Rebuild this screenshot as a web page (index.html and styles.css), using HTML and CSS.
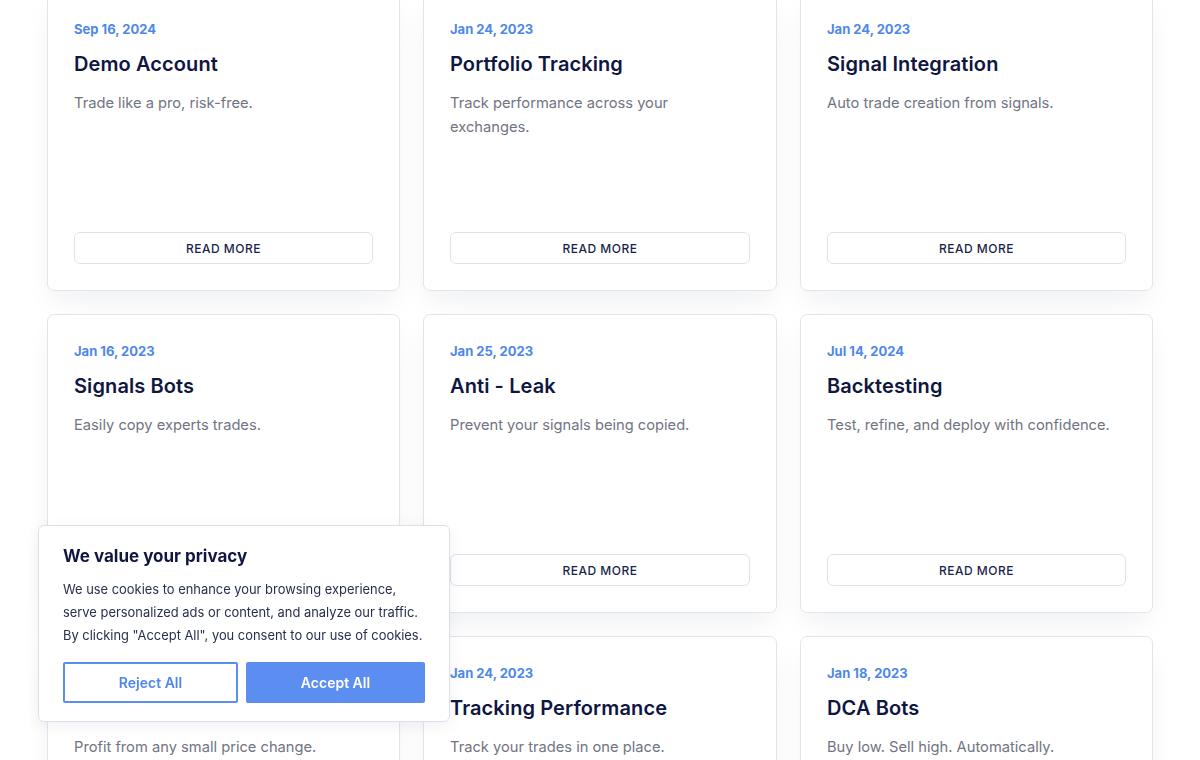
FILE: index.html
```html
<!DOCTYPE html>
<html lang="en">
<head>
<meta charset="utf-8">
<title>Features</title>
<link rel="stylesheet" href="styles.css">
</head>
<body>
<main class="features">
  <article class="card">
    <p class="card-date">Sep 16, 2024</p>
    <h3 class="card-title">Demo Account</h3>
    <p class="card-text">Trade like a pro, risk-free.</p>
    <a class="card-btn" href="#">READ MORE</a>
  </article>
  <article class="card">
    <p class="card-date">Jan 24, 2023</p>
    <h3 class="card-title">Portfolio Tracking</h3>
    <p class="card-text">Track performance across your exchanges.</p>
    <a class="card-btn" href="#">READ MORE</a>
  </article>
  <article class="card">
    <p class="card-date">Jan 24, 2023</p>
    <h3 class="card-title">Signal Integration</h3>
    <p class="card-text">Auto trade creation from signals.</p>
    <a class="card-btn" href="#">READ MORE</a>
  </article>
  <article class="card">
    <p class="card-date">Jan 16, 2023</p>
    <h3 class="card-title">Signals Bots</h3>
    <p class="card-text">Easily copy experts trades.</p>
    <a class="card-btn" href="#">READ MORE</a>
  </article>
  <article class="card">
    <p class="card-date">Jan 25, 2023</p>
    <h3 class="card-title">Anti - Leak</h3>
    <p class="card-text">Prevent your signals being copied.</p>
    <a class="card-btn" href="#">READ MORE</a>
  </article>
  <article class="card">
    <p class="card-date">Jul 14, 2024</p>
    <h3 class="card-title">Backtesting</h3>
    <p class="card-text">Test, refine, and deploy with confidence.</p>
    <a class="card-btn" href="#">READ MORE</a>
  </article>
  <article class="card">
    <p class="card-date">Jan 20, 2023</p>
    <h3 class="card-title">Grid Bots</h3>
    <p class="card-text">Profit from any small price change.</p>
    <a class="card-btn" href="#">READ MORE</a>
  </article>
  <article class="card">
    <p class="card-date">Jan 24, 2023</p>
    <h3 class="card-title">Tracking Performance</h3>
    <p class="card-text">Track your trades in one place.</p>
    <a class="card-btn" href="#">READ MORE</a>
  </article>
  <article class="card">
    <p class="card-date">Jan 18, 2023</p>
    <h3 class="card-title">DCA Bots</h3>
    <p class="card-text">Buy low. Sell high. Automatically.</p>
    <a class="card-btn" href="#">READ MORE</a>
  </article>
</main>

<aside class="consent">
  <h2 class="consent-title">We value your privacy</h2>
  <p class="consent-text">We use cookies to enhance your browsing experience, serve personalized ads or content, and analyze our traffic. By clicking "Accept All", you consent to our use of cookies.</p>
  <div class="consent-actions">
    <button class="consent-btn consent-reject" type="button">Reject All</button>
    <button class="consent-btn consent-accept" type="button">Accept All</button>
  </div>
</aside>
</body>
</html>
```

FILE: styles.css
```css
* { box-sizing: border-box; }

html, body {
  margin: 0;
  padding: 0;
  background: #ffffff;
  overflow: hidden;
}

body {
  font-family: "Inter", "Noto Sans", sans-serif;
  color: #0f1642;
}

/* three-column grid of feature cards */
.features {
  width: 1106px;
  margin: -8px auto 0;
  display: grid;
  grid-template-columns: 353px 354px 353px;
  column-gap: 23px;
  row-gap: 23px;
}

.card {
  min-height: 299px;
  display: flex;
  flex-direction: column;
  padding: 27px 26px 26px 26px;
  background: #fff;
  border: 1px solid #e3e5ec;
  border-radius: 7px;
  box-shadow: 0 14px 30px -6px rgba(20, 24, 60, 0.07);
}

.card-date {
  margin: 0;
  font-size: 13px;
  line-height: 18px;
  font-weight: 700;
  color: #4d88e8;
}

.card-title {
  margin: 13px 0 0;
  font-size: 20px;
  line-height: 26px;
  font-weight: 600;
  color: #0f1642;
  letter-spacing: 0.1px;
}

.card-text {
  margin: 14px 0 0;
  font-size: 14.7px;
  line-height: 24px;
  color: #717482;
}

.card-btn {
  margin-top: auto;
  height: 32px;
  display: flex;
  align-items: center;
  justify-content: center;
  border: 1px solid #dfe2ea;
  border-radius: 6px;
  font-size: 12px;
  font-weight: 500;
  letter-spacing: 0.5px;
  color: #1b1f4a;
  text-decoration: none;
}

/* cookie consent panel pinned to the bottom-left corner */
.consent {
  position: fixed;
  left: 38px;
  bottom: 38px;
  width: 412px;
  padding: 18px 24px 18px 24px;
  background: #fff;
  border: 1px solid #dde0e8;
  border-radius: 6px;
  box-shadow: 0 4px 16px rgba(20, 24, 60, 0.06);
}

.consent-title {
  margin: 0;
  font-size: 17px;
  line-height: 24px;
  font-weight: 700;
  color: #111640;
}

.consent-text {
  margin: 10px 0 0;
  font-size: 12.9px;
  line-height: 23px;
  color: #2a2f4f;
}

.consent-actions {
  margin-top: 15px;
  display: flex;
  gap: 8px;
}

.consent-btn {
  height: 41px;
  border-radius: 2px;
  font-family: inherit;
  font-size: 14px;
  font-weight: 600;
  cursor: pointer;
}

.consent-reject {
  width: 175px;
  background: #fff;
  border: 2px solid #5b8ef0;
  color: #4f86ea;
}

.consent-accept {
  flex: 1;
  background: #5b8ef0;
  border: 2px solid #5b8ef0;
  color: #fff;
}
```
